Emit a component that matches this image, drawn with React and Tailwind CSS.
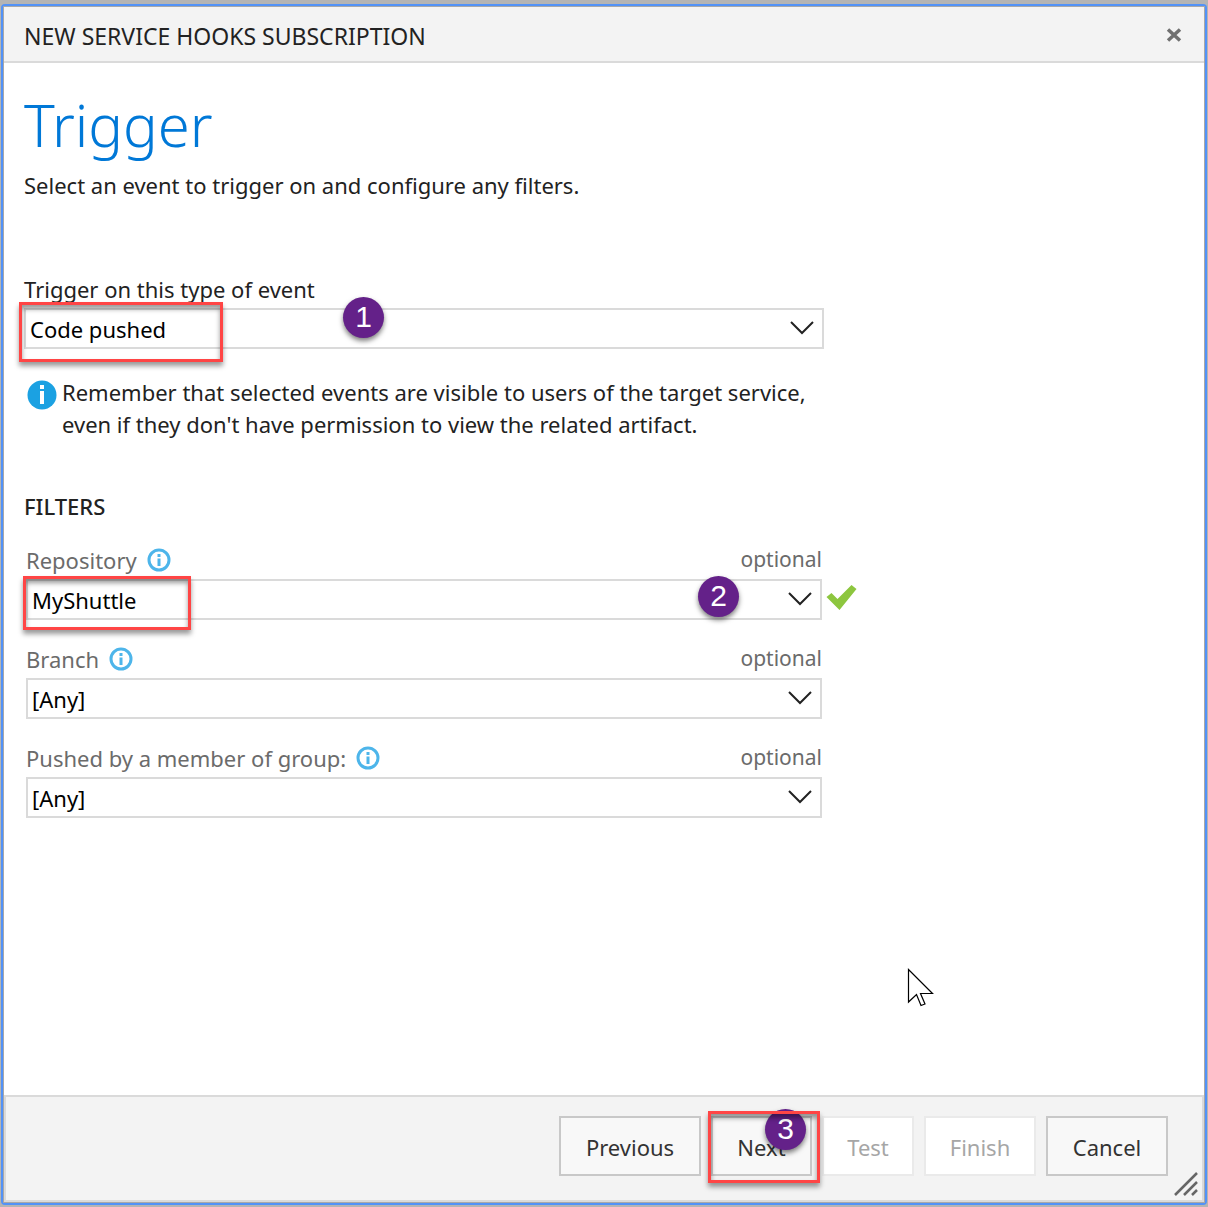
import React from "react";

function Chevron() {
  return (
    <svg className="pointer-events-none absolute top-3 right-2.5 h-4 w-6" viewBox="0 0 24 16" fill="none" stroke="#222" strokeWidth="2">
      <path d="M1 2 L12 13 L23 2" />
    </svg>
  );
}

function Select({ id, value }) {
  return (
    <div className="relative">
      <select
        id={id}
        defaultValue={value}
        className="block h-[41px] w-full appearance-none rounded-none border-2 border-[#dadada] bg-white px-1 pt-0.5 text-[22px] text-black outline-none"
      >
        <option>{value}</option>
      </select>
      <Chevron />
    </div>
  );
}

function InfoRing() {
  return (
    <svg className="h-6 w-6 shrink-0" viewBox="0 0 24 24" fill="none">
      <circle cx="12" cy="12" r="10" stroke="#4db5ea" strokeWidth="3" />
      <rect x="10.5" y="6" width="3" height="3" fill="#4db5ea" />
      <rect x="10.5" y="10.5" width="3" height="7.5" fill="#4db5ea" />
    </svg>
  );
}

function Callout({ children, className }) {
  return (
    <span
      className={
        "absolute flex size-[41px] items-center justify-center rounded-full bg-[#642189] pb-0.5 font-['Liberation_Sans',sans-serif] text-[30px] leading-none text-white shadow-[0_3px_5px_rgba(0,0,0,0.5)] " +
        className
      }
    >
      {children}
    </span>
  );
}

function Highlight({ className }) {
  return (
    <span
      className={
        "pointer-events-none absolute border-3 border-[#ff4545] shadow-[0_4px_5px_rgba(0,0,0,0.4),inset_0_4px_5px_rgba(0,0,0,0.4)] " +
        className
      }
    />
  );
}

function Filter({ id, label, value, children }) {
  return (
    <div className="relative">
      <div className="flex h-[38px] items-center justify-between text-[#6b6b6b]">
        <span className="flex items-center gap-2.5">
          <label htmlFor={id}>{label}</label>
          <InfoRing />
        </span>
        <span className="text-[21px]">optional</span>
      </div>
      <Select id={id} value={value} />
      {children}
    </div>
  );
}

function FooterButton({ children, disabled, className }) {
  return (
    <button
      type="button"
      disabled={disabled}
      className={
        "h-[60px] border-2 border-[#c8c8c8] bg-[#f8f8f8] pt-0.5 text-[#333] disabled:border-[#eaeaea] disabled:bg-white disabled:text-[#a6a6a6] " +
        className
      }
    >
      {children}
    </button>
  );
}

export default function App() {
  return (
    <div className="flex min-h-screen flex-col bg-[#b4b4b4] pt-1 pr-px pb-0.5 pl-px font-['Noto_Sans','Open_Sans',sans-serif] text-[22px] text-[#222]">
      <div className="flex flex-1 flex-col rounded-sm border-2 border-[#5292f7]">
        <div className="flex flex-1 flex-col border border-[#a8a8a8] bg-white">
          <header className="flex h-14 items-center justify-between border-b-2 border-[#dadada] bg-[#f3f3f3] pt-0.5 pr-[22px] pl-5">
            <h1 className="pt-0.5 text-[23px]">NEW SERVICE HOOKS SUBSCRIPTION</h1>
            <button type="button" aria-label="Close">
              <svg className="h-4 w-4" viewBox="0 0 16 16" stroke="#707070" strokeWidth="3.5">
                <path d="M2 2.500 L14 13.500 M14 2.500 L2 13.500" />
              </svg>
            </button>
          </header>

          <main className="relative flex-1 pl-5">
            <h2 className="pt-[26px] text-[58px] leading-[72px] font-light text-[#0078d7]">Trigger</h2>
            <p className="pt-1 leading-10">Select an event to trigger on and configure any filters.</p>

            <div className="max-w-[800px] pt-[68px]">
              <div className="relative">
                <label htmlFor="event" className="block h-[35px] leading-8">
                  Trigger on this type of event
                </label>
                <Select id="event" value="Code pushed" />
                <Highlight className="top-[29px] -left-[5px] h-[60px] w-[204px]" />
                <Callout className="top-6 left-[319px]">1</Callout>
              </div>

              <div className="flex gap-[5px] pt-[27px]">
                <svg className="mt-1 ml-[3px] h-[30px] w-[30px] shrink-0" viewBox="0 0 30 30">
                  <circle cx="15" cy="15" r="14.500" fill="#1ba1e2" />
                  <rect x="13" y="5" width="4" height="4" fill="#fff" />
                  <rect x="13" y="11" width="4" height="13" fill="#fff" />
                </svg>
                <p className="leading-8">
                  Remember that selected events are visible to users of the target service,
                  <br />
                  even if they don't have permission to view the related artifact.
                </p>
              </div>

              <h3 className="pt-[50px] leading-8 font-medium">FILTERS</h3>

              <div className="flex flex-col gap-5 px-0.5 pt-[19px]">
                <Filter id="repository" label="Repository" value="MyShuttle">
                  <Highlight className="top-[35px] -left-[3px] h-[54px] w-[168px]" />
                  <Callout className="top-[35px] right-[83px]">2</Callout>
                  <svg className="absolute top-[43px] -right-[35px] h-7 w-[31px]" viewBox="0 0 30 28">
                    <path d="M0 13 L5 9 L11 15 L25 1 L30 5 L13 26 Z" fill="#8dc63f" />
                  </svg>
                </Filter>
                <Filter id="branch" label="Branch" value="[Any]" />
                <Filter id="group" label="Pushed by a member of group:" value="[Any]" />
              </div>
            </div>

            <svg className="absolute top-[905px] left-[903px] h-10 w-7" viewBox="0 0 28 40" fill="#fff" stroke="#000" strokeWidth="1.200">
              <path d="M1.500 1.500 V34 L9.500 26.500 L14 37.500 L18 36 L13.500 25.500 H25.500 Z" />
            </svg>
          </main>

          <footer className="relative flex h-[107px] justify-end gap-2.5 border-2 border-[#dadada] bg-[#f3f3f3] pt-[19px] pr-[34px]">
            <FooterButton className="w-[142px]">Previous</FooterButton>
            <div className="relative">
              <FooterButton className="w-[101px]">Next</FooterButton>
              <Callout className="-top-[7px] left-[54px]">3</Callout>
              <Highlight className="-top-[5px] -left-[3px] h-[72px] w-[112px]" />
            </div>
            <FooterButton disabled className="w-[92px]">Test</FooterButton>
            <FooterButton disabled className="w-28">Finish</FooterButton>
            <FooterButton className="w-[122px]">Cancel</FooterButton>
            <svg className="absolute right-1 bottom-1 h-6 w-6" viewBox="0 0 24 24" stroke="#666" strokeWidth="2.500">
              <path d="M1 23 L23 1 M10 23 L23 10 M18 23 L23 18" />
            </svg>
          </footer>
        </div>
      </div>
    </div>
  );
}
